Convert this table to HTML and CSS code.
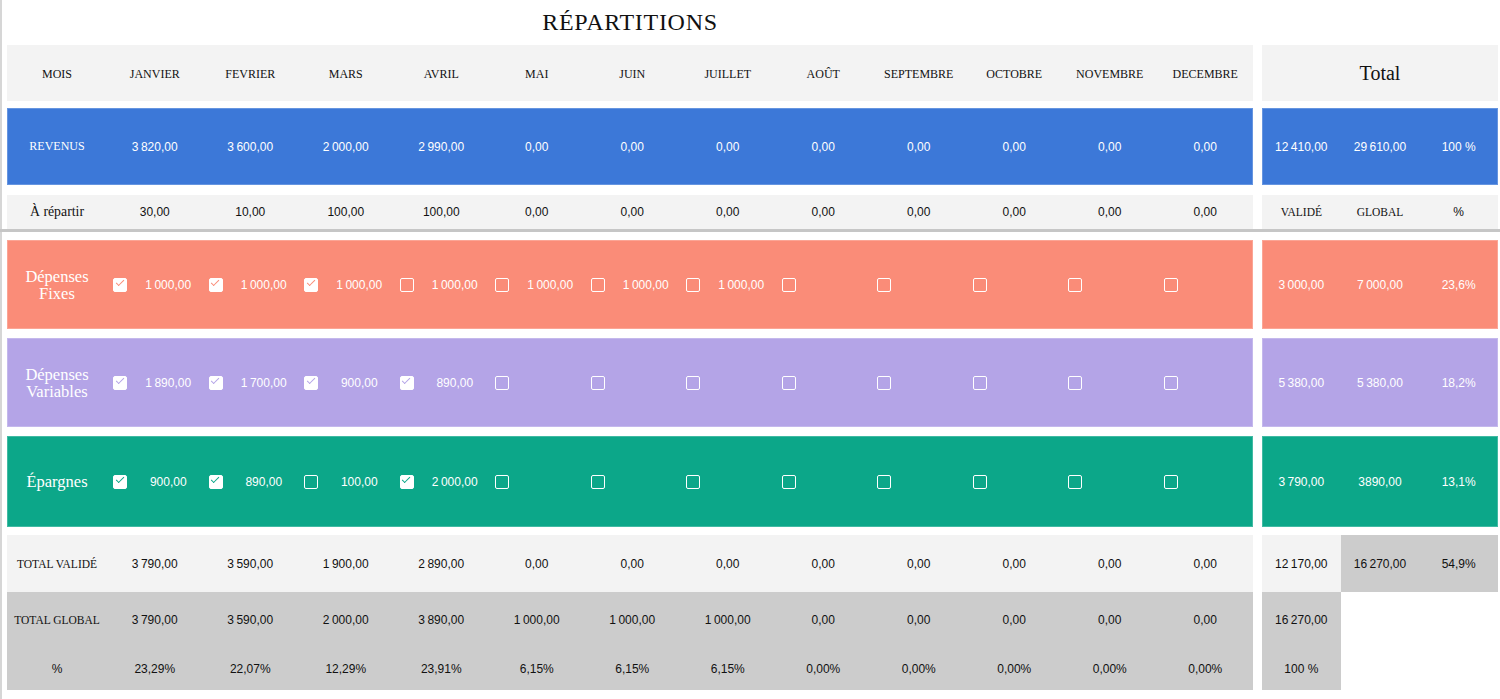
FILE: index.html
```html
<!DOCTYPE html>
<html lang="fr">
<head>
<meta charset="utf-8">
<title>Répartitions</title>
<link rel="stylesheet" href="styles.css">
</head>
<body>
<div class="sheet">
  <div class="row title-row">
    <div class="main-t"><h1 class="title">RÉPARTITIONS</h1></div>
    <div class="side-t"></div>
  </div>

  <div class="row head">
    <div class="main">
      <div class="cell lab">MOIS</div>
      <div class="cell lab">JANVIER</div>
      <div class="cell lab">FEVRIER</div>
      <div class="cell lab">MARS</div>
      <div class="cell lab">AVRIL</div>
      <div class="cell lab">MAI</div>
      <div class="cell lab">JUIN</div>
      <div class="cell lab">JUILLET</div>
      <div class="cell lab">AOÛT</div>
      <div class="cell lab">SEPTEMBRE</div>
      <div class="cell lab">OCTOBRE</div>
      <div class="cell lab">NOVEMBRE</div>
      <div class="cell lab">DECEMBRE</div>
    </div>
    <div class="side">
      <div class="cell total">Total</div>
    </div>
  </div>

  <div class="row rev colored">
    <div class="main">
      <div class="cell lab">REVENUS</div>
      <div class="cell num">3&thinsp;820,00</div>
      <div class="cell num">3&thinsp;600,00</div>
      <div class="cell num">2&thinsp;000,00</div>
      <div class="cell num">2&thinsp;990,00</div>
      <div class="cell num">0,00</div>
      <div class="cell num">0,00</div>
      <div class="cell num">0,00</div>
      <div class="cell num">0,00</div>
      <div class="cell num">0,00</div>
      <div class="cell num">0,00</div>
      <div class="cell num">0,00</div>
      <div class="cell num">0,00</div>
    </div>
    <div class="side">
      <div class="cell num">12&thinsp;410,00</div>
      <div class="cell num">29&thinsp;610,00</div>
      <div class="cell num">100 %</div>
    </div>
  </div>

  <div class="row rep">
    <div class="main">
      <div class="cell lab big">À répartir</div>
      <div class="cell num">30,00</div>
      <div class="cell num">10,00</div>
      <div class="cell num">100,00</div>
      <div class="cell num">100,00</div>
      <div class="cell num">0,00</div>
      <div class="cell num">0,00</div>
      <div class="cell num">0,00</div>
      <div class="cell num">0,00</div>
      <div class="cell num">0,00</div>
      <div class="cell num">0,00</div>
      <div class="cell num">0,00</div>
      <div class="cell num">0,00</div>
    </div>
    <div class="side">
      <div class="cell lab sm">VALIDÉ</div>
      <div class="cell lab sm">GLOBAL</div>
      <div class="cell num">%</div>
    </div>
  </div>

  <div class="sep"></div>

  <div class="row fixes colored">
    <div class="main">
      <div class="cell lab cat">Dépenses<br>Fixes</div>
      <div class="cell chk"><span class="cb on"></span><span class="val">1&thinsp;000,00</span></div>
      <div class="cell chk"><span class="cb on"></span><span class="val">1&thinsp;000,00</span></div>
      <div class="cell chk"><span class="cb on"></span><span class="val">1&thinsp;000,00</span></div>
      <div class="cell chk"><span class="cb"></span><span class="val">1&thinsp;000,00</span></div>
      <div class="cell chk"><span class="cb"></span><span class="val">1&thinsp;000,00</span></div>
      <div class="cell chk"><span class="cb"></span><span class="val">1&thinsp;000,00</span></div>
      <div class="cell chk"><span class="cb"></span><span class="val">1&thinsp;000,00</span></div>
      <div class="cell chk"><span class="cb"></span><span class="val"></span></div>
      <div class="cell chk"><span class="cb"></span><span class="val"></span></div>
      <div class="cell chk"><span class="cb"></span><span class="val"></span></div>
      <div class="cell chk"><span class="cb"></span><span class="val"></span></div>
      <div class="cell chk"><span class="cb"></span><span class="val"></span></div>
    </div>
    <div class="side">
      <div class="cell num">3&thinsp;000,00</div>
      <div class="cell num">7&thinsp;000,00</div>
      <div class="cell num">23,6%</div>
    </div>
  </div>

  <div class="row vars colored">
    <div class="main">
      <div class="cell lab cat">Dépenses<br>Variables</div>
      <div class="cell chk"><span class="cb on"></span><span class="val">1&thinsp;890,00</span></div>
      <div class="cell chk"><span class="cb on"></span><span class="val">1&thinsp;700,00</span></div>
      <div class="cell chk"><span class="cb on"></span><span class="val">900,00</span></div>
      <div class="cell chk"><span class="cb on"></span><span class="val">890,00</span></div>
      <div class="cell chk"><span class="cb"></span><span class="val"></span></div>
      <div class="cell chk"><span class="cb"></span><span class="val"></span></div>
      <div class="cell chk"><span class="cb"></span><span class="val"></span></div>
      <div class="cell chk"><span class="cb"></span><span class="val"></span></div>
      <div class="cell chk"><span class="cb"></span><span class="val"></span></div>
      <div class="cell chk"><span class="cb"></span><span class="val"></span></div>
      <div class="cell chk"><span class="cb"></span><span class="val"></span></div>
      <div class="cell chk"><span class="cb"></span><span class="val"></span></div>
    </div>
    <div class="side">
      <div class="cell num">5&thinsp;380,00</div>
      <div class="cell num">5&thinsp;380,00</div>
      <div class="cell num">18,2%</div>
    </div>
  </div>

  <div class="row epar colored">
    <div class="main">
      <div class="cell lab cat">Épargnes</div>
      <div class="cell chk"><span class="cb on"></span><span class="val">900,00</span></div>
      <div class="cell chk"><span class="cb on"></span><span class="val">890,00</span></div>
      <div class="cell chk"><span class="cb"></span><span class="val">100,00</span></div>
      <div class="cell chk"><span class="cb on"></span><span class="val">2&thinsp;000,00</span></div>
      <div class="cell chk"><span class="cb"></span><span class="val"></span></div>
      <div class="cell chk"><span class="cb"></span><span class="val"></span></div>
      <div class="cell chk"><span class="cb"></span><span class="val"></span></div>
      <div class="cell chk"><span class="cb"></span><span class="val"></span></div>
      <div class="cell chk"><span class="cb"></span><span class="val"></span></div>
      <div class="cell chk"><span class="cb"></span><span class="val"></span></div>
      <div class="cell chk"><span class="cb"></span><span class="val"></span></div>
      <div class="cell chk"><span class="cb"></span><span class="val"></span></div>
    </div>
    <div class="side">
      <div class="cell num">3&thinsp;790,00</div>
      <div class="cell num">3890,00</div>
      <div class="cell num">13,1%</div>
    </div>
  </div>

  <div class="row tv">
    <div class="main">
      <div class="cell lab sm">TOTAL VALIDÉ</div>
      <div class="cell num">3&thinsp;790,00</div>
      <div class="cell num">3&thinsp;590,00</div>
      <div class="cell num">1&thinsp;900,00</div>
      <div class="cell num">2&thinsp;890,00</div>
      <div class="cell num">0,00</div>
      <div class="cell num">0,00</div>
      <div class="cell num">0,00</div>
      <div class="cell num">0,00</div>
      <div class="cell num">0,00</div>
      <div class="cell num">0,00</div>
      <div class="cell num">0,00</div>
      <div class="cell num">0,00</div>
    </div>
    <div class="side">
      <div class="cell num light">12&thinsp;170,00</div>
      <div class="cell num dark">16&thinsp;270,00</div>
      <div class="cell num dark">54,9%</div>
    </div>
  </div>

  <div class="row tg">
    <div class="main">
      <div class="cell lab sm">TOTAL GLOBAL</div>
      <div class="cell num">3&thinsp;790,00</div>
      <div class="cell num">3&thinsp;590,00</div>
      <div class="cell num">2&thinsp;000,00</div>
      <div class="cell num">3&thinsp;890,00</div>
      <div class="cell num">1&thinsp;000,00</div>
      <div class="cell num">1&thinsp;000,00</div>
      <div class="cell num">1&thinsp;000,00</div>
      <div class="cell num">0,00</div>
      <div class="cell num">0,00</div>
      <div class="cell num">0,00</div>
      <div class="cell num">0,00</div>
      <div class="cell num">0,00</div>
    </div>
    <div class="side">
      <div class="cell num dark">16&thinsp;270,00</div>
    </div>
  </div>

  <div class="row pct">
    <div class="main">
      <div class="cell num">%</div>
      <div class="cell num">23,29%</div>
      <div class="cell num">22,07%</div>
      <div class="cell num">12,29%</div>
      <div class="cell num">23,91%</div>
      <div class="cell num">6,15%</div>
      <div class="cell num">6,15%</div>
      <div class="cell num">6,15%</div>
      <div class="cell num">0,00%</div>
      <div class="cell num">0,00%</div>
      <div class="cell num">0,00%</div>
      <div class="cell num">0,00%</div>
      <div class="cell num">0,00%</div>
    </div>
    <div class="side">
      <div class="cell num dark">100 %</div>
    </div>
  </div>
</div>
</body>
</html>
```

FILE: styles.css
```css
* { box-sizing: border-box; }

html, body {
  margin: 0;
  padding: 0;
  background: #ffffff;
}

body {
  font-family: "Liberation Sans", Arial, sans-serif;
  color: #111;
}

.sheet {
  width: 1500px;
  min-height: 699px;
  border-left: 2px solid #d6d6d6;
  padding-left: 5px;
  padding-right: 2px;
}

.row {
  display: flex;
  gap: 9px;
}

.main {
  flex: 1;
  display: grid;
  grid-template-columns: 100px repeat(12, 1fr);
}

.side {
  width: 236px;
  flex: none;
  display: grid;
  grid-template-columns: repeat(3, 1fr);
}

.main-t { flex: 1; text-align: center; }
.side-t { width: 236px; flex: none; }

.title-row { height: 45px; }

.title {
  margin: 0;
  padding-top: 10px;
  font-family: "Liberation Serif", "Times New Roman", serif;
  font-weight: normal;
  font-size: 24px;
  line-height: 24px;
  letter-spacing: 0.7px;
  color: #111;
}

.cell {
  display: flex;
  align-items: center;
  justify-content: center;
  text-align: center;
  white-space: nowrap;
}

.lab {
  font-family: "Liberation Serif", "Times New Roman", serif;
  font-size: 12px;
}

.head .lab { padding-top: 2px; }

.lab.sm { font-size: 11.5px; }
.lab.big { font-size: 13.8px; }

.lab.cat {
  font-size: 16.5px;
  line-height: 17px;
  white-space: normal;
}

.num {
  font-family: "Liberation Sans", Arial, sans-serif;
  font-size: 12px;
}

.total {
  grid-column: 1 / 4;
  padding-top: 1px;
  font-family: "Liberation Serif", "Times New Roman", serif;
  font-size: 20px;
}

/* row bands */
.head { height: 56px; }
.head .main, .head .side { background: #f3f3f3; }

.rev { margin-top: 7px; height: 77px; --c: #3c78d8; }
.rep { margin-top: 10px; height: 34px; }
.rep .main, .rep .side { background: #f3f3f3; }

.sep {
  height: 3px;
  margin-left: -7px;
  margin-right: -2px;
  background: #c6c6c6;
}

.fixes { margin-top: 8px; height: 89px; --c: #fa8c78; }
.vars  { margin-top: 9px; height: 89px; --c: #b4a4e7; }
.epar  { margin-top: 9px; height: 91px; --c: #0ca789; }

.colored .main, .colored .side {
  background: var(--c);
  box-shadow: inset 0 0 0 1px rgba(255, 255, 255, 0.22);
  color: #ffffff;
}

.tv { margin-top: 8px; height: 57px; }
.tv .main { background: #f3f3f3; }
.tg { height: 56px; }
.pct { height: 42px; }
.tg .main, .pct .main { background: #cccccc; }

.light { background: #f3f3f3; }
.dark { background: #cccccc; }

/* checkbox cells */
.chk {
  justify-content: flex-start;
  padding-left: 6px;
}

.val {
  flex: 1;
  margin-left: 7px;
  text-align: center;
  font-family: "Liberation Sans", Arial, sans-serif;
  font-size: 12px;
}

.cb {
  flex: none;
  width: 14px;
  height: 14px;
  border: 1.8px solid #ffffff;
  border-radius: 2px;
  position: relative;
}

.cb.on { background: #ffffff; }

.cb.on::after {
  content: "";
  position: absolute;
  left: 3.6px;
  top: -0.4px;
  width: 3.4px;
  height: 7px;
  border: solid var(--c);
  border-width: 0 1.8px 1.8px 0;
  transform: rotate(45deg);
}
```
